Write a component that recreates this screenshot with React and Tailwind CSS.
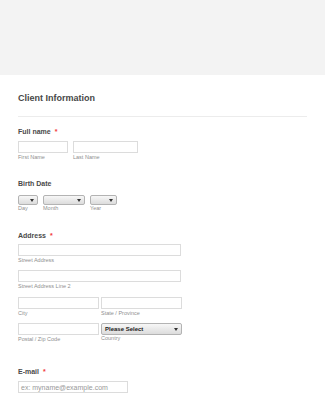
import React from 'react';

const font = { fontFamily: '"Liberation Sans", Arial, sans-serif' };

const Label = ({ children, required, className = '' }) => (
  <div className={`flex items-center h-[8px] leading-[8px] text-[7px] font-bold text-[#4a4a4a] ${className}`}>
    <span>{children}</span>
    {required && <span className="ml-[4px] text-[7px] text-[#f23a3a]">*</span>}
  </div>
);

const Sub = ({ children, className = '' }) => (
  <div className={`h-[7px] leading-[7px] text-[5.5px] text-[#8f8f8f] whitespace-nowrap ${className}`}>{children}</div>
);

const Input = ({ className = '', children }) => (
  <div className={`h-[12px] border border-[#dcdcdc] bg-white ${className}`}>{children}</div>
);

const Arrow = () => (
  <svg width="4" height="3" viewBox="0 0 4 3" className="shrink-0">
    <path d="M0 0 L4 0 L2 3 Z" fill="#333" />
  </svg>
);

const Select = ({ className = '', children }) => (
  <div
    className={`flex items-center justify-between pl-[3px] pr-[3px] border border-[#b3b3b3] rounded-[2px] bg-gradient-to-b from-[#f7f7f7] to-[#dcdcdc] ${className}`}
  >
    <span className="text-[6px] font-bold text-[#222] leading-none">{children}</span>
    <Arrow />
  </div>
);

export default function App() {
  return (
    <div style={font} className="w-[325px] h-[400px] overflow-hidden bg-white">
      <div className="h-[75px] bg-[#f3f3f3]" />
      <div className="px-[18px]">
        <div className="mt-[18px] h-[10px] leading-[10px] text-[9px] font-bold text-[#474747]">Client Information</div>
        <div className="mt-[13px] h-px w-[289px] bg-[#ececec]" />

        <Label required className="mt-[11px]">Full name</Label>
        <div className="mt-[5px] flex gap-[5px]">
          <div className="flex flex-col">
            <Input className="w-[50px]" />
            <Sub className="mt-[1px]">First Name</Sub>
          </div>
          <div className="flex flex-col">
            <Input className="w-[65px]" />
            <Sub className="mt-[1px]">Last Name</Sub>
          </div>
        </div>

        <Label className="mt-[19px]">Birth Date</Label>
        <div className="mt-[7px] flex gap-[5px]">
          <div className="flex flex-col">
            <Select className="w-[20px] h-[10px]" />
            <Sub>Day</Sub>
          </div>
          <div className="flex flex-col">
            <Select className="w-[42px] h-[10px]" />
            <Sub>Month</Sub>
          </div>
          <div className="flex flex-col">
            <Select className="w-[27px] h-[10px]" />
            <Sub>Year</Sub>
          </div>
        </div>

        <Label required className="mt-[20px]">Address</Label>
        <Input className="mt-[4px] w-[163px]" />
        <Sub className="mt-[1px]">Street Address</Sub>
        <Input className="mt-[6px] w-[163px]" />
        <Sub className="mt-[1px]">Street Address Line 2</Sub>
        <div className="mt-[7px] flex gap-[2px]">
          <div className="flex flex-col">
            <Input className="w-[81px]" />
            <Sub className="mt-[1px]">City</Sub>
          </div>
          <div className="flex flex-col">
            <Input className="w-[81px]" />
            <Sub className="mt-[1px]">State / Province</Sub>
          </div>
        </div>
        <div className="mt-[6px] flex gap-[2px]">
          <div className="flex flex-col">
            <Input className="w-[81px]" />
            <Sub className="mt-[1px]">Postal / Zip Code</Sub>
          </div>
          <div className="flex flex-col">
            <Select className="w-[81px] h-[12px]">Please Select</Select>
            <Sub>Country</Sub>
          </div>
        </div>

        <Label required className="mt-[25px]">E-mail</Label>
        <Input className="mt-[5px] w-[110px] h-[11px] flex items-center px-[2px]">
          <span className="text-[7px] leading-none text-[#999]">ex: myname@example.com</span>
        </Input>
      </div>
    </div>
  );
}
